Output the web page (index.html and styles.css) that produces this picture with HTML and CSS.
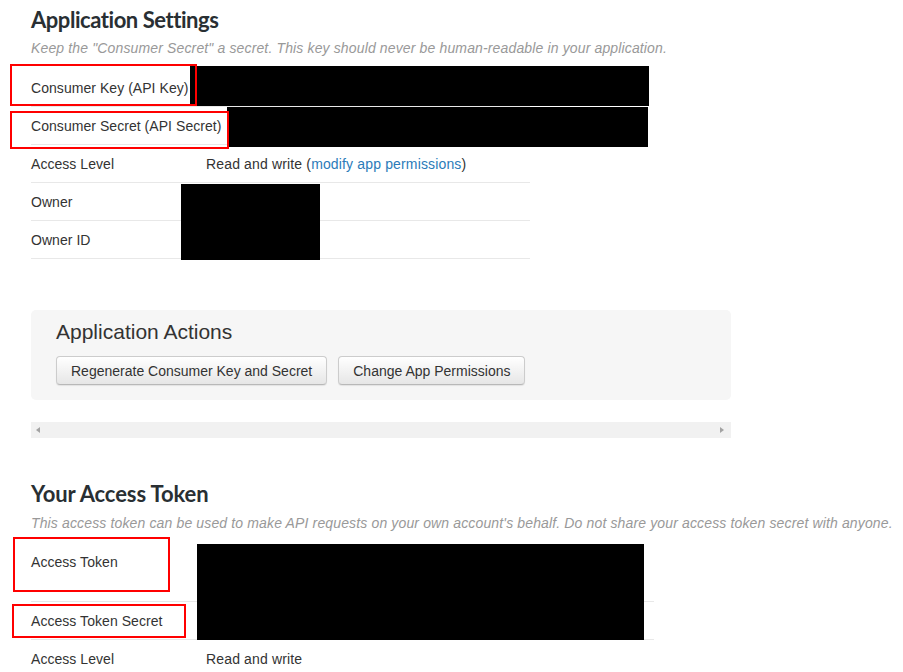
FILE: index.html
```html
<!DOCTYPE html>
<html>
<head>
<meta charset="utf-8">
<link rel="stylesheet" href="styles.css">
</head>
<body>
<div class="page">
  <section class="settings">
    <h2 class="heading">Application Settings</h2>
    <p class="note">Keep the "Consumer Secret" a secret. This key should never be human-readable in your application.</p>
    <div class="table table-app">
      <div class="row"><span class="label">Consumer Key (API Key)</span><span class="value"></span></div>
      <div class="row"><span class="label">Consumer Secret (API Secret)</span><span class="value"></span></div>
      <div class="row"><span class="label">Access Level</span><span class="value">Read and write (<a class="link" href="#">modify app permissions</a>)</span></div>
      <div class="row"><span class="label">Owner</span><span class="value"></span></div>
      <div class="row"><span class="label">Owner ID</span><span class="value"></span></div>
    </div>
  </section>

  <section class="actions">
    <h3 class="actions-title">Application Actions</h3>
    <div class="buttons">
      <button class="btn">Regenerate Consumer Key and Secret</button>
      <button class="btn">Change App Permissions</button>
    </div>
  </section>

  <div class="hscroll">
    <span class="arrow arrow-left"></span>
    <span class="arrow arrow-right"></span>
  </div>

  <section class="token">
    <h2 class="heading heading-token">Your Access Token</h2>
    <p class="note note-token">This access token can be used to make API requests on your own account's behalf. Do not share your access token secret with anyone.</p>
    <div class="table table-token">
      <div class="row row-tall"><span class="label">Access Token</span><span class="value"></span></div>
      <div class="row"><span class="label">Access Token Secret</span><span class="value"></span></div>
      <div class="row"><span class="label">Access Level</span><span class="value">Read and write</span></div>
    </div>
  </section>

  <div class="redact r1"></div>
  <div class="redact r2"></div>
  <div class="redact r3"></div>
  <div class="redact r4"></div>

  <div class="mark m1"></div>
  <div class="mark m2"></div>
  <div class="mark m3"></div>
  <div class="mark m4"></div>
</div>
</body>
</html>
```
FILE: styles.css
```css
* { box-sizing: border-box; }
html, body { margin: 0; padding: 0; background: #fff; }
body {
  font-family: "Liberation Sans", Arial, sans-serif;
  font-size: 14px;
  color: #333;
  overflow: hidden;
}
.page {
  position: relative;
  padding: 5px 0 0 31px;
  width: 903px;
  height: 672px;
  overflow: hidden;
}
.heading {
  margin: 0;
  font-family: Lato, "Liberation Sans", sans-serif;
  font-weight: 700;
  font-size: 22px;
  letter-spacing: -0.45px;
  line-height: 30px;
  color: #292f33;
}
.heading-token { letter-spacing: -0.1px; }
.note {
  margin: 4px 0 0;
  font-style: italic;
  line-height: 18px;
  letter-spacing: 0.14px;
  color: #999;
  white-space: nowrap;
}
.table { margin-top: 12px; }
.table-app { width: 499px; }
.table-token { width: 623px; margin-top: 11px; }
.row {
  display: grid;
  grid-template-columns: 175px 1fr;
  padding: 10px 0 9px;
  line-height: 18px;
  border-bottom: 1px solid #e8e8e8;
}
.label { white-space: nowrap; letter-spacing: 0.05px; }
.value { white-space: nowrap; letter-spacing: 0.15px; }
.row-tall { min-height: 59px; }
.link { color: #2b7bb9; text-decoration: none; }

.actions {
  margin-top: 51px;
  width: 700px;
  background: #f6f6f6;
  border-radius: 5px;
  padding: 10px 25px 15px;
}
.actions-title {
  margin: 0;
  font-weight: 400;
  font-size: 21px;
  line-height: 24px;
  color: #333;
}
.buttons {
  display: flex;
  gap: 11px;
  margin-top: 12px;
}
.btn {
  font-family: "Liberation Sans", Arial, sans-serif;
  font-size: 14px;
  color: #333;
  height: 29px;
  padding: 0 14px;
  border: 1px solid #ccc;
  border-bottom-color: #b8b8b8;
  border-radius: 4px;
  background: linear-gradient(#ffffff, #e6e6e6);
  box-shadow: 0 1px 1px rgba(0,0,0,0.08);
}

.hscroll {
  position: relative;
  margin-top: 22px;
  width: 700px;
  height: 16px;
  background: #f1f1f1;
}
.arrow {
  position: absolute;
  top: 5px;
  width: 0; height: 0;
  border-top: 3px solid transparent;
  border-bottom: 3px solid transparent;
}
.arrow-left { left: 5px; border-right: 4px solid #a3a3a3; }
.arrow-right { right: 7px; border-left: 4px solid #a3a3a3; }

.token { margin-top: 41px; }
.note-token { margin-top: 5px; }

.redact { position: absolute; background: #000; }
.r1 { left: 190px; top: 66px; width: 459px; height: 40px; }
.r2 { left: 227px; top: 107px; width: 421px; height: 40px; }
.r3 { left: 181px; top: 184px; width: 139px; height: 76px; }
.r4 { left: 197px; top: 544px; width: 447px; height: 96px; }

.mark { position: absolute; border: 2px solid #f00; }
.m1 { left: 10px; top: 64px; width: 187px; height: 42px; }
.m2 { left: 10px; top: 111px; width: 219px; height: 38px; }
.m3 { left: 13px; top: 537px; width: 157px; height: 55px; }
.m4 { left: 12px; top: 604px; width: 174px; height: 34px; }
```
